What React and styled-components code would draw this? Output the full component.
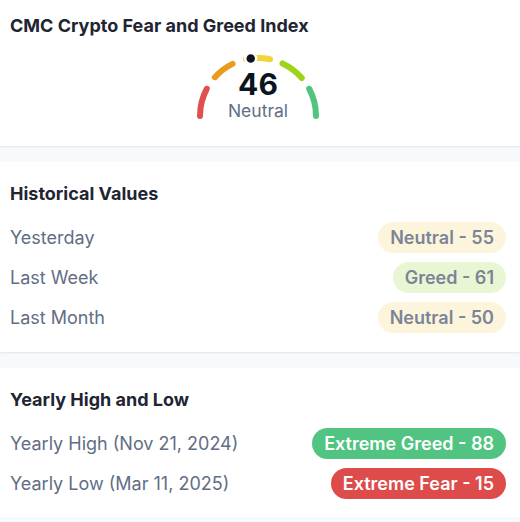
import React from 'react'
import styled, { createGlobalStyle } from 'styled-components'

const GlobalStyle = createGlobalStyle`
  html, body {
    margin: 0;
    padding: 0;
    background: #f8f9fa;
    font-family: Inter, "Noto Sans", "Liberation Sans", sans-serif;
    -webkit-font-smoothing: antialiased;
  }
`

const Page = styled.div`
  width: 520px;
  display: flex;
  flex-direction: column;
  gap: 16px;
`

const Card = styled.section`
  background: #fff;
  padding: ${props => props.$pad || '20px 14px 15px 10px'};
  box-shadow: 0 1px 2px rgba(88, 102, 126, 0.14);
`

const Title = styled.h2`
  margin: 0;
  font-size: 18px;
  line-height: 24px;
  font-weight: 700;
  color: #222531;
`

const GaugeWrap = styled.div`
  position: relative;
  width: 130px;
  height: 72px;
  margin: 16px auto 0;
`

const Readout = styled.div`
  position: absolute;
  left: 0;
  right: 0;
  bottom: 4px;
  display: flex;
  flex-direction: column;
  align-items: center;
`

const Score = styled.div`
  font-size: 30px;
  line-height: 30px;
  font-weight: 700;
  color: #0d1421;
`

const ScoreLabel = styled.div`
  margin-top: 1px;
  font-size: 17.5px;
  line-height: 22px;
  color: #616e85;
`

const Rows = styled.div`
  margin-top: 11px;
  display: flex;
  flex-direction: column;
`

const Row = styled.div`
  height: 40px;
  display: flex;
  align-items: center;
  justify-content: space-between;
`

const Label = styled.span`
  font-size: 18px;
  color: #616e85;
`

const Pill = styled.span`
  height: 31px;
  display: inline-flex;
  align-items: center;
  padding: 0 12px;
  border-radius: 16px;
  font-size: 18px;
  font-weight: 600;
  background: ${props => props.$bg};
  color: ${props => props.$fg};
`

const tones = {
  neutral: { bg: '#fcf5dc', fg: '#7c8498' },
  greed: { bg: '#e9f6d3', fg: '#7c8498' },
  extremeGreed: { bg: '#51c481', fg: '#fff' },
  extremeFear: { bg: '#dd4b4b', fg: '#fff' },
}

const CX = 65
const CY = 62
const R = 58

function point(deg) {
  const rad = (deg * Math.PI) / 180
  return [CX + R * Math.cos(rad), CY - R * Math.sin(rad)]
}

function arc(from, to) {
  const [x1, y1] = point(from)
  const [x2, y2] = point(to)
  return `M ${x1.toFixed(2)} ${y1.toFixed(2)} A ${R} ${R} 0 0 1 ${x2.toFixed(2)} ${y2.toFixed(2)}`
}

const segments = [
  { from: 180, to: 152, color: '#e0504d' },
  { from: 138, to: 116, color: '#e89b1c' },
  { from: 102, to: 78, color: '#f0d43c' },
  { from: 65, to: 41, color: '#9dd41a' },
  { from: 28, to: 0, color: '#52c47f' },
]

function Gauge({ value, label }) {
  const [dx, dy] = point(180 - value * 1.8)
  return (
    <GaugeWrap>
      <svg width='130' height='72' viewBox='0 0 130 72'>
        {segments.map(s => (
          <path key={s.from} d={arc(s.from, s.to)} fill='none' stroke={s.color} strokeWidth='6' strokeLinecap='round' />
        ))}
        <circle cx={dx} cy={dy} r='5.5' fill='#0d1421' stroke='#fff' strokeWidth='2.5' />
      </svg>
      <Readout>
        <Score>{value}</Score>
        <ScoreLabel>{label}</ScoreLabel>
      </Readout>
    </GaugeWrap>
  )
}

const history = [
  { label: 'Yesterday', text: 'Neutral - 55', tone: 'neutral' },
  { label: 'Last Week', text: 'Greed - 61', tone: 'greed' },
  { label: 'Last Month', text: 'Neutral - 50', tone: 'neutral' },
]

const yearly = [
  { label: 'Yearly High', date: '(Nov 21, 2024)', text: 'Extreme Greed - 88', tone: 'extremeGreed' },
  { label: 'Yearly Low', date: '(Mar 11, 2025)', text: 'Extreme Fear - 15', tone: 'extremeFear' },
]

export default function App() {
  return (
    <>
      <GlobalStyle />
      <Page>
        <Card $pad='14px 14px 20px 10px'>
          <Title>CMC Crypto Fear and Greed Index</Title>
          <Gauge value={46} label='Neutral' />
        </Card>

        <Card>
          <Title>Historical Values</Title>
          <Rows>
            {history.map(h => (
              <Row key={h.label}>
                <Label>{h.label}</Label>
                <Pill $bg={tones[h.tone].bg} $fg={tones[h.tone].fg}>{h.text}</Pill>
              </Row>
            ))}
          </Rows>
        </Card>

        <Card $pad='20px 14px 14px 10px'>
          <Title>Yearly High and Low</Title>
          <Rows>
            {yearly.map(y => (
              <Row key={y.label}>
                <Label>{y.label} {y.date}</Label>
                <Pill $bg={tones[y.tone].bg} $fg={tones[y.tone].fg}>{y.text}</Pill>
              </Row>
            ))}
          </Rows>
        </Card>
      </Page>
    </>
  )
}
